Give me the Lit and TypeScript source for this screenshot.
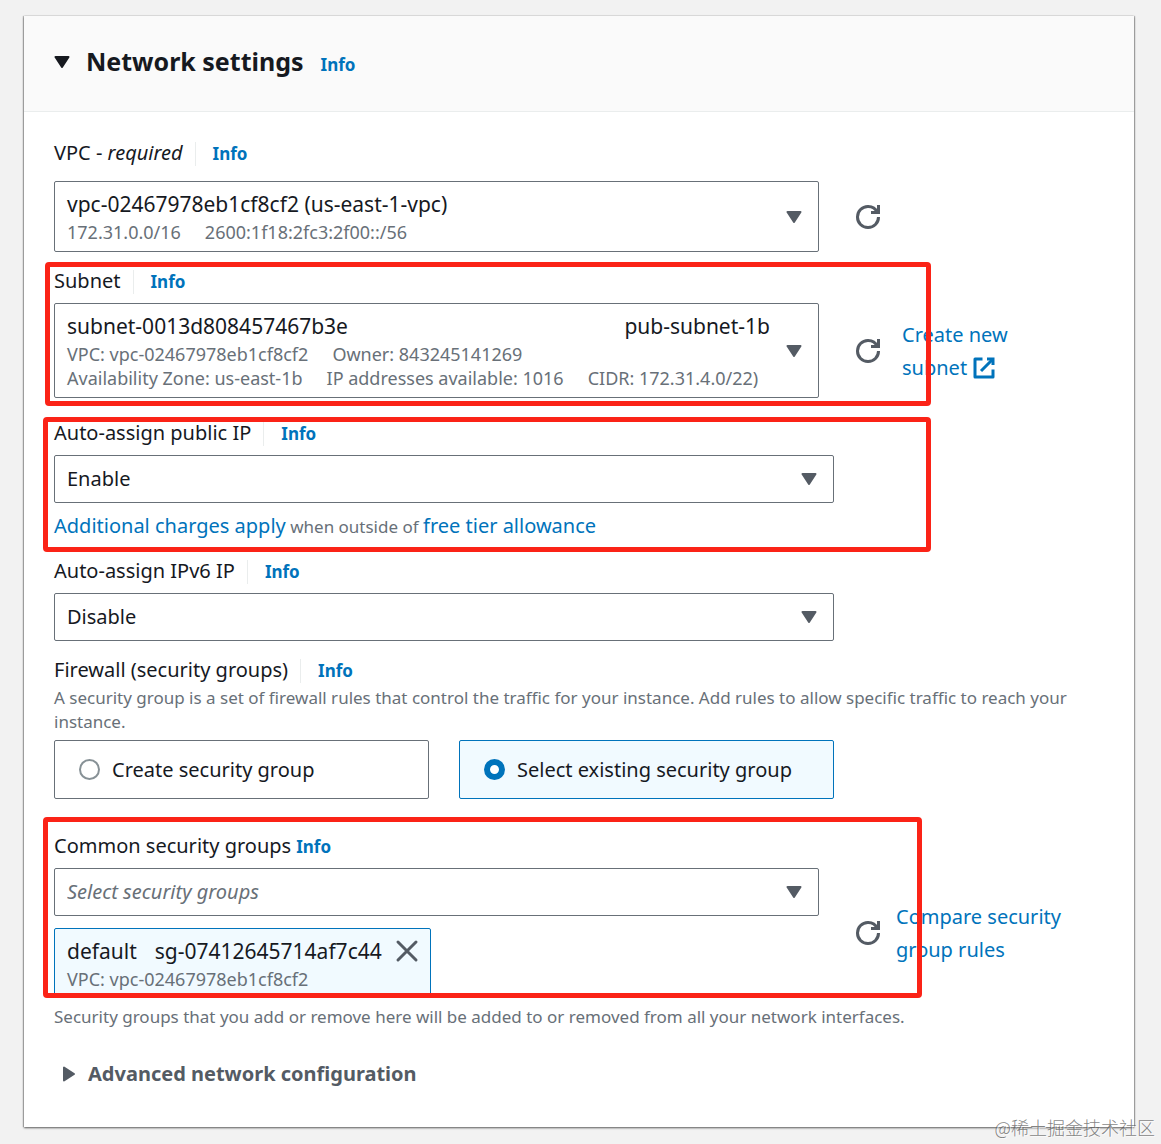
import { LitElement, html, css, svg } from "lit";
import { customElement, property, state } from "lit/decorators.js";

const caretDown = html`<svg class="caret" viewBox="0 0 16 12" width="16" height="12" aria-hidden="true">
  <path d="M1.5 1h13l-6.5 10z" fill="currentColor" stroke="currentColor" stroke-width="2" stroke-linejoin="round" />
</svg>`;

const caretRight = html`<svg viewBox="0 0 12 16" width="12" height="16" aria-hidden="true">
  <path d="M1 1.5v13l10-6.5z" fill="currentColor" stroke="currentColor" stroke-width="2" stroke-linejoin="round" />
</svg>`;

const strokeIcon = (paths: unknown) => html`<svg
  class="icon" viewBox="0 0 16 16" width="24" height="24" fill="none"
  stroke="currentColor" stroke-width="2" aria-hidden="true">${paths}</svg>`;

const refreshIcon = strokeIcon(svg`
  <path d="M10 5h5V0" />
  <path d="M15 8a6.957 6.957 0 0 1-7 7 6.957 6.957 0 0 1-7-7 6.957 6.957 0 0 1 7-7 6.87 6.87 0 0 1 6.3 4" />`);

const externalIcon = strokeIcon(svg`
  <path d="M10 2h4v4" /><path d="M6 10l8-8" /><path d="M14 9.048V14H2V2h5" stroke-linejoin="round" />`);

const closeIcon = strokeIcon(svg`<path d="M2 2l12 12M14 2L2 14" stroke-linecap="round" />`);

const base = css`
  *, *::before, *::after { box-sizing: border-box; }
  a { color: #0073bb; text-decoration: none; }
  button, select, input { font: inherit; color: inherit; margin: 0; }
  .info { font-size: 17px; font-weight: 700; }
  .icon { display: block; }
`;

@customElement("field-label")
class FieldLabel extends LitElement {
  @property({ type: Boolean }) compact = false;
  static styles = [base, css`
    :host { display: flex; align-items: baseline; height: 24px; line-height: 24px; gap: 12px; }
    :host([compact]) { gap: 5px; }
    .info { border-left: 1px solid #eaeded; padding-left: 17px; }
    :host([compact]) .info { border: 0; padding: 0; }
  `];
  render() {
    return html`<slot></slot><a class="info" href="#info">Info</a>`;
  }
}

@customElement("app-root")
class AppRoot extends LitElement {
  @state() private group = "existing";

  static styles = [base, css`
    :host {
      display: block;
      box-sizing: border-box;
      position: relative;
      min-height: 100vh;
      padding: 16px 27px 16px 24px;
      background: #f2f2f2;
      color: #16191f;
      font-family: "Noto Sans", "Open Sans", sans-serif;
      font-size: 20px;
      line-height: 24px;
    }
    .card { background: #fff; box-shadow: 0 1px 2px 0 rgba(0, 0, 0, .6), -1px 0 1px 0 rgba(0, 0, 0, .2), 1px 0 1px 0 rgba(0, 0, 0, .2); }
    .head {
      display: flex; align-items: center; gap: 17px;
      padding: 27px 30px 31px; border-bottom: 1px solid #eaeded; background: #fafafa;
    }
    .toggle {
      display: flex; align-items: center; gap: 16px;
      border: 0; padding: 0; background: none; text-align: left;
    }
    h2 { display: flex; margin: 0; font-size: 25px; line-height: 37px; font-weight: 700; }
    .head .info { padding-top: 6px; }
    .body { padding: 29px 30px 41px; }
    .field { position: relative; margin-top: 17px; }
    .field.first { margin-top: 0; }
    .field.apart { margin-top: 23px; }
    .field.near { margin-top: 21px; }
    .field.far { margin-top: 35px; }
    .gap { margin-top: 10px; }
    .first .gap { margin-top: 16px; }
    .row { display: flex; align-items: center; }
    .inner { flex: none; width: calc((100% + 30px) * 0.75 - 45px); }
    .wide { width: calc((100% + 30px) * 0.75 - 30px); }
    .refresh { flex: none; margin-left: 37px; border: 0; padding: 0; background: none; color: #545b64; }
    .aside { margin-left: 22px; max-width: 112px; line-height: 33px; }
    .aside.long { margin-left: 16px; max-width: 180px; }
    .aside .icon { display: inline-block; vertical-align: -5px; }

    .control {
      display: flex; align-items: center; width: 100%;
      border: 1px solid #687078; border-radius: 2px; background: #fff;
      text-align: left;
    }
    .rich { padding: 8px 16px 7px 12px; }
    .rich .text { flex: 1; display: block; min-width: 0; }
    .main { display: flex; justify-content: space-between; font-size: 21px; line-height: 28px; padding: 0 16px 2px 0; }
    .meta { display: flex; gap: 24px; font-size: 18px; line-height: 24px; color: #687078; white-space: nowrap; }
    .caret { display: block; flex: none; color: #545b64; }
    .head .caret { color: #16191f; }
    .pick { display: grid; align-items: center; }
    .pick > * { grid-area: 1 / 1; }
    .pick .caret { justify-self: end; margin-right: 17px; pointer-events: none; }
    select.control { appearance: none; height: 48px; padding: 0 44px 0 12px; }
    select.empty { color: #687078; font-style: italic; }

    .hint { margin: 0; font-size: 17px; font-weight: 450; line-height: 24px; color: #687078; }
    .hint.links { margin-top: 11px; height: 24px; }
    .hint.links a { font-size: 20px; }
    .hint.under { margin-top: 4px; }
    .hint.after { margin-top: 7px; }

    .tiles { display: grid; grid-template-columns: 1fr 1fr; gap: 30px; margin-top: 6px; }
    .tile {
      display: flex; align-items: center; gap: 12px; height: 59px; padding: 0 24px;
      border: 1px solid #687078; border-radius: 2px;
    }
    .tile.on { border-color: #0073bb; background: #f1faff; }
    .tile input {
      appearance: none; flex: none; width: 21px; height: 21px;
      border: 2px solid #879196; border-radius: 50%; background: #fff;
    }
    .tile input:checked { border: 6px solid #0073bb; }

    .token {
      display: inline-flex; align-items: flex-start; gap: 13px; margin-top: 12px;
      padding: 8px 11px 6px 12px; border: 1px solid #0073bb; border-radius: 2px;
      background: #f1faff; vertical-align: top;
    }
    .token .names { display: flex; gap: 18px; font-size: 21px; line-height: 28px; padding-bottom: 2px; }
    .token button { border: 0; padding: 2px 0; background: none; color: #545b64; }

    .advanced { margin-top: 33px; padding-left: 9px; }
    .advanced .toggle { gap: 13px; font-weight: 700; color: #545b64; }

    .mark { position: absolute; border: 5px solid #fb2317; border-radius: 4px; pointer-events: none; }
    .mark.subnet { inset: -7px 173px -8px -9px; }
    .mark.public { inset: -4px 173px -14px -11px; }
    .mark.groups { inset: -17px 182px 31px -11px; }
    .watermark {
      position: absolute; right: 6px; bottom: 5px;
      font: 300 18px/24px "Noto Sans CJK SC", sans-serif; color: rgba(90, 90, 90, .75);
      text-shadow: 1px 1px 0 rgba(255, 255, 255, .7);
    }
  `];

  private tile(value: string, text: string) {
    const on = this.group === value;
    return html`<label class="tile ${on ? "on" : ""}">
      <input type="radio" name="firewall" .checked=${on} @change=${() => (this.group = value)} />
      <span>${text}</span>
    </label>`;
  }

  private refresh(what: string) {
    return html`<button class="refresh" type="button" aria-label="Refresh ${what}">${refreshIcon}</button>`;
  }

  render() {
    return html`
      <section class="card">
        <header class="head">
          <h2><button class="toggle" type="button" aria-expanded="true">${caretDown}<span>Network settings</span></button></h2>
          <a class="info" href="#info">Info</a>
        </header>
        <div class="body">
          <div class="field first">
            <field-label><span id="vpc">VPC - <i>required</i></span></field-label>
            <div class="row gap">
              <div class="inner">
                <button class="control rich" type="button" aria-haspopup="listbox" aria-labelledby="vpc">
                  <span class="text">
                    <span class="main">vpc-02467978eb1cf8cf2 (us-east-1-vpc)</span>
                    <span class="meta"><span>172.31.0.0/16</span><span>2600:1f18:2fc3:2f00::/56</span></span>
                  </span>${caretDown}
                </button>
              </div>
              ${this.refresh("VPCs")}
            </div>
          </div>

          <div class="field">
            <field-label><span id="subnet">Subnet</span></field-label>
            <div class="row gap">
              <div class="inner">
                <button class="control rich" type="button" aria-haspopup="listbox" aria-labelledby="subnet">
                  <span class="text">
                    <span class="main"><span>subnet-0013d808457467b3e</span><span>pub-subnet-1b</span></span>
                    <span class="meta"><span>VPC: vpc-02467978eb1cf8cf2</span><span>Owner: 843245141269</span></span>
                    <span class="meta"><span>Availability Zone: us-east-1b</span><span>IP addresses available: 1016</span><span>CIDR: 172.31.4.0/22)</span></span>
                  </span>${caretDown}
                </button>
              </div>
              ${this.refresh("subnets")}
              <a class="aside" href="#create-subnet">Create new subnet ${externalIcon}</a>
            </div>
            <div class="mark subnet"></div>
          </div>

          <div class="field apart">
            <field-label><label for="public-ip">Auto-assign public IP</label></field-label>
            <div class="pick wide gap">
              <select class="control" id="public-ip"><option>Enable</option><option>Disable</option></select>${caretDown}
            </div>
            <p class="hint links"><a href="#charges">Additional charges apply</a> when outside of <a href="#free-tier">free tier allowance</a></p>
            <div class="mark public"></div>
          </div>

          <div class="field near">
            <field-label><label for="ipv6">Auto-assign IPv6 IP</label></field-label>
            <div class="pick wide gap">
              <select class="control" id="ipv6"><option>Disable</option><option>Enable</option></select>${caretDown}
            </div>
          </div>

          <div class="field">
            <field-label><span id="firewall">Firewall (security groups)</span></field-label>
            <p class="hint under">A security group is a set of firewall rules that control the traffic for your instance. Add rules to allow specific traffic to reach your instance.</p>
            <div class="tiles wide" role="radiogroup" aria-labelledby="firewall">
              ${this.tile("create", "Create security group")}
              ${this.tile("existing", "Select existing security group")}
            </div>
          </div>

          <div class="field far">
            <field-label compact><label for="groups">Common security groups</label></field-label>
            <div class="row gap">
              <div class="inner">
                <div class="pick">
                  <select class="control empty" id="groups"><option>Select security groups</option></select>${caretDown}
                </div>
                <div class="token">
                  <div>
                    <div class="names"><span>default</span><span>sg-07412645714af7c44</span></div>
                    <div class="meta">VPC: vpc-02467978eb1cf8cf2</div>
                  </div>
                  <button type="button" aria-label="Remove default">${closeIcon}</button>
                </div>
              </div>
              ${this.refresh("security groups")}
              <a class="aside long" href="#compare">Compare security group rules</a>
            </div>
            <p class="hint after">Security groups that you add or remove here will be added to or removed from all your network interfaces.</p>
            <div class="mark groups"></div>
          </div>

          <div class="advanced">
            <button class="toggle" type="button" aria-expanded="false">${caretRight}<span>Advanced network configuration</span></button>
          </div>
        </div>
      </section>
      <div class="watermark">@稀土掘金技术社区</div>
    `;
  }
}
